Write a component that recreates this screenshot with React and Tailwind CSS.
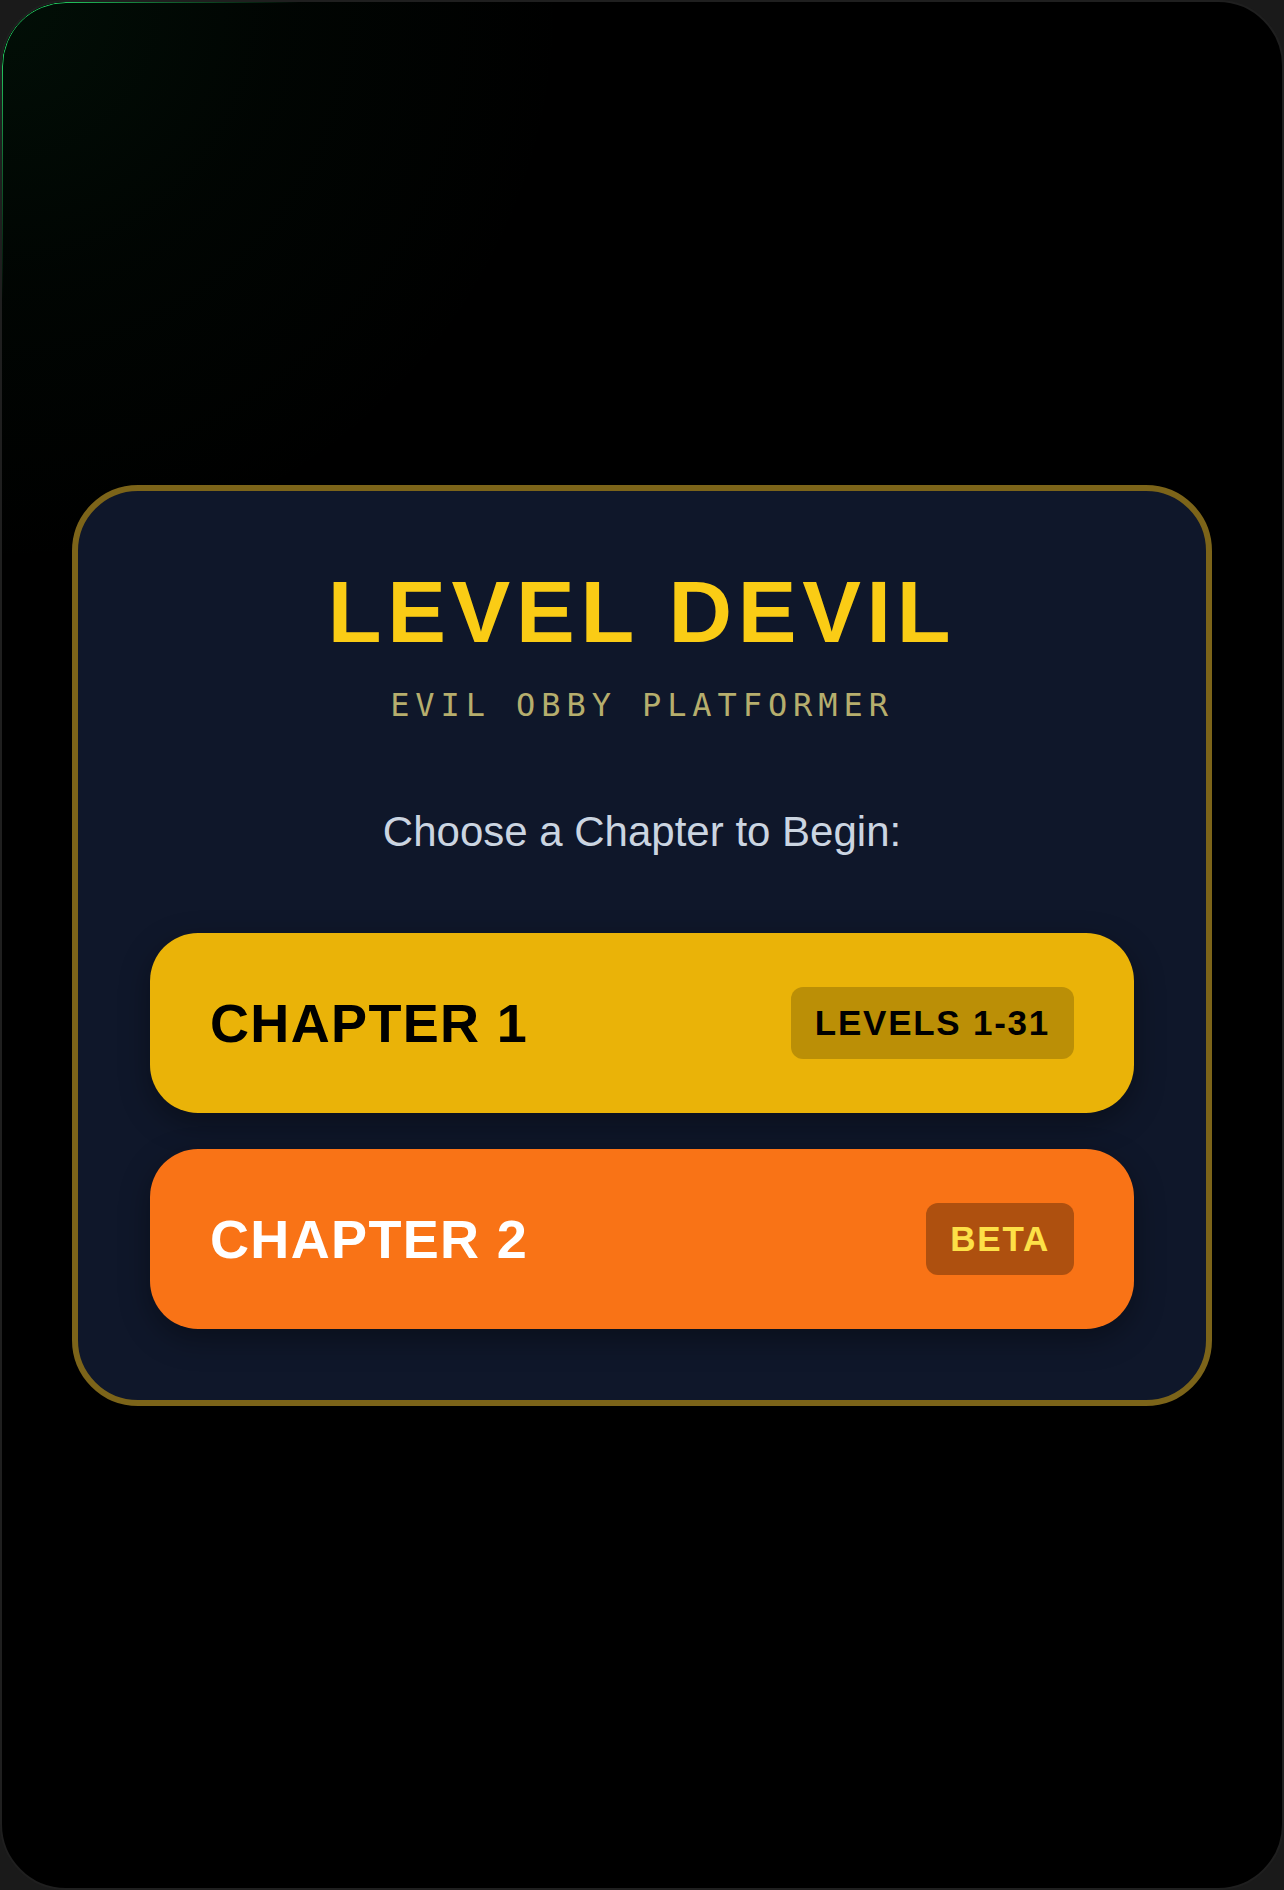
import React from 'react';

// Chapter picker for the Level Devil start screen
const chapters = [
    {
        id: 1,
        name: 'CHAPTER 1',
        tag: 'LEVELS 1-31',
        buttonClass: 'bg-[#eab308] text-black',
        tagClass: 'bg-black/20 text-black',
    },
    {
        id: 2,
        name: 'CHAPTER 2',
        tag: 'BETA',
        buttonClass: 'bg-[#f97316] text-white',
        tagClass: 'bg-black/30 text-[#fde047]',
    },
];

function ChapterButton({ chapter }) {
    return (
        <button
            type="button"
            className={`flex h-[180px] w-full items-center justify-between rounded-[48px] px-[60px] shadow-[0_10px_30px_rgba(0,0,0,0.35)] ${chapter.buttonClass}`}
        >
            <span className="text-[54px] font-bold leading-none tracking-wide">{chapter.name}</span>
            <span className={`flex h-[72px] items-center rounded-xl px-6 text-[35px] font-bold leading-none tracking-wider ${chapter.tagClass}`}>
                {chapter.tag}
            </span>
        </button>
    );
}

export default function App() {
    return (
        <div className="min-h-[1890px] w-full bg-[#1a1a1a] font-['Liberation_Sans',Arial,sans-serif]">
            {/* Device frame */}
            <div className="relative flex h-[1890px] w-full items-center justify-center overflow-hidden rounded-[66px] border-2 border-[#1f1f1f] bg-black">
                {/* green glow in the top-left corner */}
                <div className="pointer-events-none absolute inset-0 bg-[radial-gradient(circle_at_0%_0%,rgba(22,163,74,0.09),rgba(22,163,74,0.03)_12%,transparent_25%)]" />
                <div className="pointer-events-none absolute inset-0 rounded-[64px] border border-[#22c55e] [mask-image:radial-gradient(circle_at_0%_0%,black_0px,black_60px,rgba(0,0,0,0.5)_160px,transparent_300px)]" />

                {/* Card */}
                <div className="relative w-[1140px] rounded-[66px] border-[6px] border-[#7c6419] bg-[#0f172a] px-[72px] pb-[71px] pt-[77px]">
                    <h1 className="text-center text-[88px] font-bold leading-none tracking-[0.065em] text-[#facc15]">
                        LEVEL DEVIL
                    </h1>
                    <p className="mt-[33px] text-center font-['DejaVu_Sans_Mono',monospace] text-[32px] leading-none tracking-[0.185em] text-[#b6ae6d]">
                        EVIL OBBY PLATFORMER
                    </p>
                    <p className="mt-[90px] text-center text-[42px] leading-none text-[#cbd5e1]">
                        Choose a Chapter to Begin:
                    </p>

                    <div className="mt-[80px] flex flex-col gap-[36px]">
                        {chapters.map((chapter) => (
                            <ChapterButton key={chapter.id} chapter={chapter} />
                        ))}
                    </div>
                </div>
            </div>
        </div>
    );
}
